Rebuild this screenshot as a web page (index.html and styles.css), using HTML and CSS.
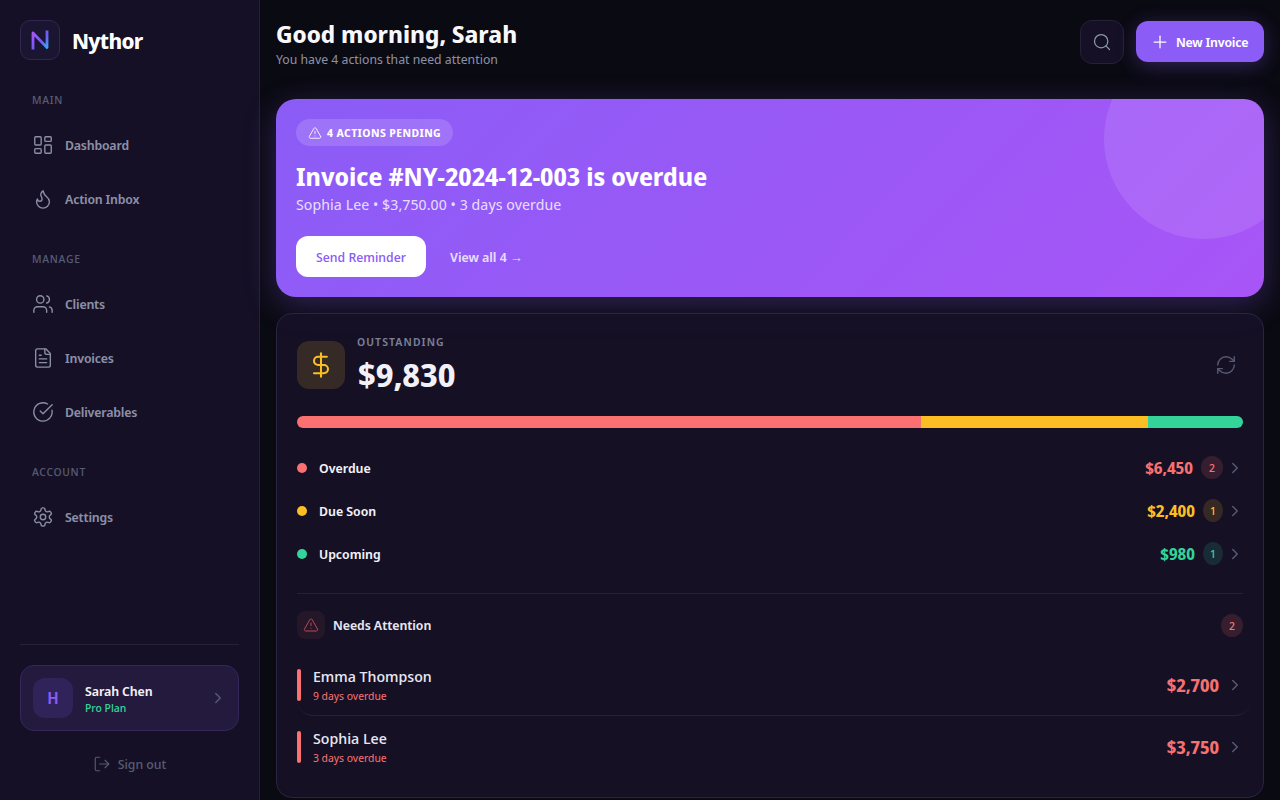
FILE: index.html
```html
<!DOCTYPE html>
<html lang="en">
<head>
<meta charset="utf-8">
<title>Nythor</title>
<link rel="stylesheet" href="styles.css">
</head>
<body>
<div class="app">
  <aside class="sidebar">
    <div class="brand">
      <div class="logo">
        <svg width="24" height="24" viewBox="0 0 24 24" fill="none"><defs><linearGradient id="lg" x1="0" y1="0" x2="1" y2="1"><stop offset="0" stop-color="#a855f7"/><stop offset="0.6" stop-color="#6d5cf7"/><stop offset="1" stop-color="#38a8f0"/></linearGradient></defs><path d="M5 20V5l14 14.5V4" stroke="url(#lg)" stroke-linejoin="round" stroke-linecap="square"/></svg>
      </div>
      <span class="brand-name">Nythor</span>
    </div>
    <nav class="nav">
      <div class="nav-label">MAIN</div>
      <a class="nav-item"><svg class="ic" viewBox="0 0 24 24"><rect x="3" y="3" width="7" height="9" rx="1"/><rect x="14" y="3" width="7" height="5" rx="1"/><rect x="14" y="12" width="7" height="9" rx="1"/><rect x="3" y="16" width="7" height="5" rx="1"/></svg>Dashboard</a>
      <a class="nav-item"><svg class="ic" viewBox="0 0 24 24"><path d="M8.5 14.5A2.5 2.5 0 0 0 11 12c0-1.38-.5-2-1-3-1.07-2.14-.22-4.05 2-6 .5 2.5 2 4.9 4 6.5s3 3.5 3 5.5a7 7 0 1 1-14 0c0-1.15.43-2.29 1-3a2.5 2.5 0 0 0 2.5 2.5z"/></svg>Action Inbox</a>
      <div class="nav-label next">MANAGE</div>
      <a class="nav-item"><svg class="ic" viewBox="0 0 24 24"><path d="M16 21v-2a4 4 0 0 0-4-4H6a4 4 0 0 0-4 4v2"/><circle cx="9" cy="7" r="4"/><path d="M22 21v-2a4 4 0 0 0-3-3.87"/><path d="M16 3.13a4 4 0 0 1 0 7.75"/></svg>Clients</a>
      <a class="nav-item"><svg class="ic" viewBox="0 0 24 24"><path d="M15 2H6a2 2 0 0 0-2 2v16a2 2 0 0 0 2 2h12a2 2 0 0 0 2-2V7z"/><path d="M14 2v4a2 2 0 0 0 2 2h4"/><path d="M16 13H8"/><path d="M16 17H8"/><path d="M10 9H8"/></svg>Invoices</a>
      <a class="nav-item"><svg class="ic" viewBox="0 0 24 24"><path d="M21.8 10A10 10 0 1 1 17 3.3"/><path d="m9 11 3 3L22 4"/></svg>Deliverables</a>
      <div class="nav-label next">ACCOUNT</div>
      <a class="nav-item"><svg class="ic" viewBox="0 0 24 24"><path d="M12.22 2h-.44a2 2 0 0 0-2 2v.18a2 2 0 0 1-1 1.73l-.43.25a2 2 0 0 1-2 0l-.15-.08a2 2 0 0 0-2.73.73l-.22.38a2 2 0 0 0 .73 2.73l.15.1a2 2 0 0 1 1 1.72v.51a2 2 0 0 1-1 1.74l-.15.09a2 2 0 0 0-.73 2.73l.22.38a2 2 0 0 0 2.73.73l.15-.08a2 2 0 0 1 2 0l.43.25a2 2 0 0 1 1 1.73V20a2 2 0 0 0 2 2h.44a2 2 0 0 0 2-2v-.18a2 2 0 0 1 1-1.73l.43-.25a2 2 0 0 1 2 0l.15.08a2 2 0 0 0 2.73-.73l.22-.39a2 2 0 0 0-.73-2.73l-.15-.08a2 2 0 0 1-1-1.74v-.5a2 2 0 0 1 1-1.74l.15-.09a2 2 0 0 0 .73-2.73l-.22-.38a2 2 0 0 0-2.73-.73l-.15.08a2 2 0 0 1-2 0l-.43-.25a2 2 0 0 1-1-1.73V4a2 2 0 0 0-2-2z"/><circle cx="12" cy="12" r="3"/></svg>Settings</a>
    </nav>
    <div class="side-foot">
      <div class="user-card">
        <div class="avatar">H</div>
        <div class="user-meta">
          <div class="user-name">Sarah Chen</div>
          <div class="user-plan">Pro Plan</div>
        </div>
        <svg class="chev" viewBox="0 0 24 24"><path d="m9 18 6-6-6-6"/></svg>
      </div>
      <a class="signout"><svg class="ic-s" viewBox="0 0 24 24"><path d="M9 21H5a2 2 0 0 1-2-2V5a2 2 0 0 1 2-2h4"/><path d="m16 17 5-5-5-5"/><path d="M21 12H9"/></svg>Sign out</a>
    </div>
  </aside>
  <main class="main">
    <header class="top">
      <div>
        <h1 class="greet">Good morning, Sarah</h1>
        <p class="sub">You have 4 actions that need attention</p>
      </div>
      <div class="top-actions">
        <button class="search-btn"><svg class="ic-search" viewBox="0 0 24 24"><circle cx="11" cy="11" r="8"/><path d="m21 21-4.3-4.3"/></svg></button>
        <button class="new-btn"><svg class="ic-plus" viewBox="0 0 24 24"><path d="M5 12h14"/><path d="M12 5v14"/></svg>New Invoice</button>
      </div>
    </header>
    <section class="hero">
      <div class="hero-circle"></div>
      <div class="pill"><svg class="ic-pill" viewBox="0 0 24 24"><path d="m21.73 18-8-14a2 2 0 0 0-3.48 0l-8 14A2 2 0 0 0 4 21h16a2 2 0 0 0 1.73-3"/><path d="M12 9v4"/><path d="M12 17h.01"/></svg>4 ACTIONS PENDING</div>
      <h2 class="hero-title">Invoice #NY-2024-12-003 is overdue</h2>
      <p class="hero-sub">Sophia Lee • $3,750.00 • 3 days overdue</p>
      <div class="hero-actions">
        <button class="remind">Send Reminder</button>
        <a class="view-all">View all 4 →</a>
      </div>
    </section>
    <section class="card">
      <div class="card-head">
        <div class="dollar"><svg class="ic-dollar" viewBox="0 0 24 24"><path d="M12 2v20"/><path d="M17 5H9.5a3.5 3.5 0 0 0 0 7h5a3.5 3.5 0 0 1 0 7H6"/></svg></div>
        <div class="head-text">
          <div class="out-label">OUTSTANDING</div>
          <div class="out-value">$9,830</div>
        </div>
        <svg class="ic-refresh" viewBox="0 0 24 24"><path d="M3 12a9 9 0 0 1 9-9 9.75 9.75 0 0 1 6.74 2.74L21 8"/><path d="M21 3v5h-5"/><path d="M21 12a9 9 0 0 1-9 9 9.75 9.75 0 0 1-6.74-2.74L3 16"/><path d="M8 16H3v5"/></svg>
      </div>
      <div class="bar">
        <span class="seg seg-red"></span><span class="seg seg-yellow"></span><span class="seg seg-green"></span>
      </div>
      <div class="rows">
        <div class="row"><span class="dot red-bg"></span><span class="row-name">Overdue</span><span class="row-amt red">$6,450</span><span class="count count-red">2</span><svg class="chev" viewBox="0 0 24 24"><path d="m9 18 6-6-6-6"/></svg></div>
        <div class="row"><span class="dot yellow-bg"></span><span class="row-name">Due Soon</span><span class="row-amt yellow">$2,400</span><span class="count count-yellow">1</span><svg class="chev" viewBox="0 0 24 24"><path d="m9 18 6-6-6-6"/></svg></div>
        <div class="row"><span class="dot green-bg"></span><span class="row-name">Upcoming</span><span class="row-amt green">$980</span><span class="count count-green">1</span><svg class="chev" viewBox="0 0 24 24"><path d="m9 18 6-6-6-6"/></svg></div>
      </div>
      <div class="attention">
        <div class="att-head">
          <span class="att-icon"><svg class="ic-att" viewBox="0 0 24 24"><path d="m21.73 18-8-14a2 2 0 0 0-3.48 0l-8 14A2 2 0 0 0 4 21h16a2 2 0 0 0 1.73-3"/><path d="M12 9v4"/><path d="M12 17h.01"/></svg></span>
          <span class="att-title">Needs Attention</span>
          <span class="count count-red">2</span>
        </div>
        <div class="client first">
          <span class="client-bar"></span>
          <div class="client-meta"><div class="client-name">Emma Thompson</div><div class="client-late">9 days overdue</div></div>
          <span class="client-amt">$2,700</span>
          <svg class="chev" viewBox="0 0 24 24"><path d="m9 18 6-6-6-6"/></svg>
        </div>
        <div class="client">
          <span class="client-bar"></span>
          <div class="client-meta"><div class="client-name">Sophia Lee</div><div class="client-late">3 days overdue</div></div>
          <span class="client-amt">$3,750</span>
          <svg class="chev" viewBox="0 0 24 24"><path d="m9 18 6-6-6-6"/></svg>
        </div>
      </div>
    </section>
  </main>
</div>
</body>
</html>
```
FILE: styles.css
```css
* { box-sizing: border-box; }
html, body { margin: 0; height: 100%; overflow: hidden; }
body { font-family: "Noto Sans Display", "Noto Sans", sans-serif; background: #0a0a12; color: #fff; }
svg { fill: none; stroke: currentColor; stroke-width: 1.5; stroke-linecap: round; stroke-linejoin: round; display: block; flex: none; }
.app { display: flex; width: 1280px; height: 800px; }

.sidebar { width: 260px; flex: none; background: #151025; border-right: 1px solid #262038; padding: 20px 20px 13px; display: flex; flex-direction: column; }
.brand { display: flex; align-items: center; gap: 12px; height: 40px; }
.logo { width: 40px; height: 40px; border-radius: 10px; background: #1a1530; border: 1px solid #30264f; display: flex; align-items: center; justify-content: center; }
.logo svg { stroke-width: 2.8; }
.brand-name { font-size: 22px; font-weight: 700; letter-spacing: -0.7px; }
.nav { margin-top: 32px; display: flex; flex-direction: column; gap: 8px; }
.nav-label { font-size: 11px; line-height: 16px; letter-spacing: 0.7px; color: #565a73; padding-left: 12px; font-weight: 500; margin-bottom: 6px; }
.nav-label.next { margin-top: 21px; }
.nav-item { display: flex; align-items: center; gap: 11px; height: 46px; padding: 0 12px; font-size: 13px; letter-spacing: -0.2px; font-weight: 600; color: #8b8fa6; }
.ic { width: 22px; height: 22px; color: #8b8fa6; }
.side-foot { margin-top: auto; border-top: 1px solid #262038; padding-top: 20px; display: flex; flex-direction: column; }
.user-card { display: flex; align-items: center; height: 66px; padding: 0 12px; background: #231a3d; border: 1px solid #33275a; border-radius: 14px; }
.user-card .chev { margin-right: -1px; }
.avatar { width: 40px; height: 40px; border-radius: 12px; background: #30235a; color: #8b5cf6; font-size: 16px; font-weight: 600; display: flex; align-items: center; justify-content: center; }
.user-meta { margin-left: 12px; flex: 1; padding-top: 1px; }
.user-name { font-size: 13px; line-height: 18px; font-weight: 600; letter-spacing: -0.1px; color: #f1f1f8; }
.user-plan { font-size: 11px; line-height: 15px; font-weight: 500; color: #34d399; }
.chev { width: 18px; height: 18px; color: #565a73; stroke-width: 2; }
.signout { display: flex; align-items: center; justify-content: center; gap: 7px; height: 46px; margin-top: 10px; font-size: 13px; font-weight: 500; color: #565a73; }
.ic-s { width: 18px; height: 18px; }

.main { flex: 1; min-width: 0; padding: 16px 16px 0; display: flex; flex-direction: column; background: #0a0a12; }
.top { display: flex; align-items: center; justify-content: space-between; height: 52px; margin-bottom: 31px; }
.greet { margin: 0; font-size: 24px; line-height: 33px; font-weight: 700; color: #f8f8fc; }
.sub { margin: 1px 0 0; font-size: 13px; line-height: 16px; color: #8b8fa6; }
.top-actions { display: flex; align-items: center; gap: 12px; }
.search-btn { width: 44px; height: 44px; border-radius: 12px; background: #151025; border: 1px solid #262038; display: flex; align-items: center; justify-content: center; padding: 0; color: #8b9aa6; }
.ic-search { width: 20px; height: 20px; }
.new-btn { height: 41px; width: 128px; margin-bottom: 1px; padding: 0 14px; border-radius: 12px; border: 0; background: #8b5cf6; color: #fff; font: 600 13px "Noto Sans Display", "Noto Sans", sans-serif; letter-spacing: -0.2px; white-space: nowrap; display: flex; align-items: center; justify-content: flex-start; gap: 6px; box-shadow: 0 4px 20px rgba(139, 92, 246, 0.3); }
.ic-plus { width: 20px; height: 20px; }

.hero { position: relative; overflow: hidden; height: 198px; flex: none; border-radius: 20px; padding: 20px; background: linear-gradient(135deg, #8b5cf6 0%, #a855f7 100%); box-shadow: 0 8px 32px rgba(139, 92, 246, 0.3); }
.hero-circle { position: absolute; top: -60px; right: -40px; width: 200px; height: 200px; border-radius: 50%; background: rgba(255, 255, 255, 0.1); }
.pill { display: inline-flex; align-items: center; gap: 5px; height: 27px; padding: 0 12px; border-radius: 14px; background: rgba(255, 255, 255, 0.15); font-size: 11px; font-weight: 700; letter-spacing: 0.43px; }
.ic-pill { width: 14px; height: 14px; }
.hero-title { margin: 14px 0 0; font-size: 24.6px; line-height: 33px; font-weight: 700; }
.hero-sub { margin: 1px 0 0; font-size: 15px; line-height: 20px; letter-spacing: 0.08px; color: rgba(255, 255, 255, 0.8); }
.hero-actions { display: flex; align-items: center; gap: 24px; margin-top: 22px; }
.remind { width: 130px; height: 41px; border: 0; border-radius: 12px; background: #fff; color: #8b5cf6; font: 500 13px "Noto Sans Display", "Noto Sans", sans-serif; }
.view-all { font-size: 13px; font-weight: 600; color: rgba(255, 255, 255, 0.8); }

.card { margin-top: 16px; flex: none; height: 485px; border-radius: 16px; background: rgba(22, 17, 39, 0.9); border: 1px solid #2a2342; padding: 20px; position: relative; }
.card-head { display: flex; align-items: center; height: 62px; }
.dollar { width: 48px; height: 48px; border-radius: 12px; background: #352a25; display: flex; align-items: center; justify-content: center; color: #fbbf24; }
.ic-dollar { width: 28px; height: 28px; stroke-width: 1.75; }
.head-text { margin-left: 12px; flex: 1; }
.out-label { font-size: 11px; line-height: 18px; letter-spacing: 1.1px; font-weight: 600; color: #7a7f97; }
.out-value { font-size: 32.6px; line-height: 44px; margin-top: 2px; margin-left: 1px; font-weight: 700; color: #f1f1f8; }
.ic-refresh { width: 22px; height: 22px; color: #565a73; margin-right: 6px; }
.bar { display: flex; height: 12px; margin-top: 20px; border-radius: 6px; overflow: hidden; }
.seg { display: block; }
.seg-red { width: 624px; background: #fb7171; }
.seg-yellow { width: 227px; background: #fbbf24; }
.seg-green { flex: 1; background: #34d399; }
.rows { margin-top: 18px; border-bottom: 1px solid #262038; padding-bottom: 18px; }
.row { display: flex; align-items: center; height: 43px; }
.dot { width: 10px; height: 10px; border-radius: 50%; margin-right: 12px; }
.red-bg { background: #fb7171; }
.yellow-bg { background: #fbbf24; }
.green-bg { background: #34d399; }
.row-name { flex: 1; font-size: 13px; font-weight: 600; color: #f1f1f8; }
.row-amt { font-size: 16px; font-weight: 700; }
.red { color: #f87171; }
.yellow { color: #fbbf24; }
.green { color: #34d399; }
.count { width: 22px; height: 23px; border-radius: 50%; display: flex; align-items: center; justify-content: center; font-size: 11px; font-weight: 500; margin-left: 8px; }
.count-red { background: rgba(248, 113, 113, 0.15); color: #f87171; }
.count-yellow { width: 20px; background: rgba(251, 191, 36, 0.15); color: #fbbf24; }
.count-green { width: 20px; background: rgba(52, 211, 153, 0.15); color: #34d399; }
.row .chev { margin: 0 -1px 0 3px; }
.attention { padding-top: 17px; }
.att-head { display: flex; align-items: center; height: 28px; }
.att-icon { width: 28px; height: 28px; border-radius: 8px; background: #241728; display: flex; align-items: center; justify-content: center; color: #b8485a; }
.ic-att { width: 16px; height: 16px; }
.att-title { margin-left: 8px; flex: 1; font-size: 13px; font-weight: 600; letter-spacing: -0.05px; color: #e6e6f0; }
.client { display: flex; align-items: center; height: 62px; position: relative; }
.client .chev { margin: 0 -1px 0 3px; }
.client.first { margin-top: 15px; border-bottom: 1px solid #262038; border-bottom-right-radius: 16px; border-bottom-left-radius: 16px; margin-right: -8px; padding-right: 8px; }
.client-bar { width: 4px; height: 32px; border-radius: 2px; background: #fb7171; }
.client-meta { margin-left: 12px; flex: 1; padding-bottom: 1px; }
.client-name { font-size: 15px; line-height: 20px; font-weight: 500; color: #e6e6f0; }
.client-late { font-size: 11px; line-height: 14px; margin-top: 3px; color: #f87171; }
.client-amt { font-size: 17.5px; font-weight: 700; color: #f87171; margin-right: 4px; }
```
